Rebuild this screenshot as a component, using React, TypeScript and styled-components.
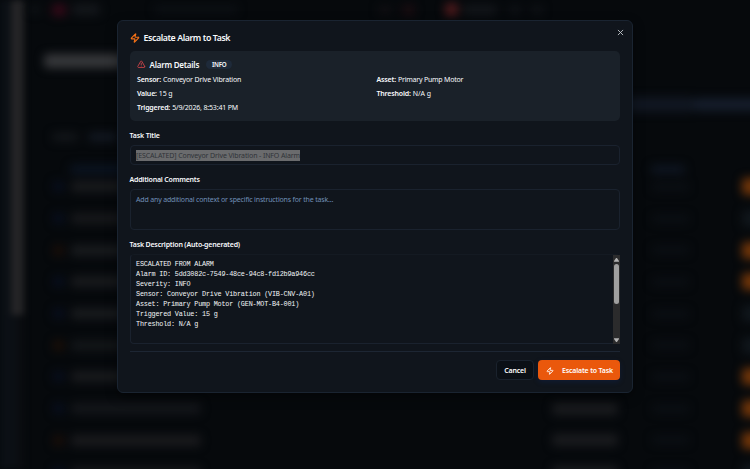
import React from "react";
import styled, { createGlobalStyle } from "styled-components";

const Global = createGlobalStyle`
  * { box-sizing: border-box; }
  html, body { margin: 0; height: 100%; background: #06090c; overflow: hidden; }
  body { font-family: "Noto Sans", "Open Sans", sans-serif; color: #f8fafc; }
`;

/* ---------- dimmed page behind the dialog ---------- */

const Screen = styled.div`
  display: grid;
  width: 750px;
  height: 469px;
  overflow: hidden;
  > * { grid-area: 1 / 1; }
`;

const Page = styled.div`
  display: flex;
  width: 750px;
  height: 469px;
  overflow: hidden;
  background: #06090c;
`;

const Rail = styled.div`
  flex: none;
  width: 24px;
  height: 469px;
  display: flex;
  justify-content: flex-end;
  background: linear-gradient(90deg, #0b1016, #0b0f14 60%, #0a0b0e);
  filter: blur(3px);
`;

const RailThumb = styled.div`
  width: 13px;
  height: 315px;
  background: #242426;
`;

const Content = styled.div`
  flex: 1;
  min-width: 0;
  display: flex;
  flex-direction: column;
  filter: blur(5px);
`;

const Line = styled.div<{ $h: number }>`
  flex: none;
  display: flex;
  align-items: center;
  height: ${(p) => p.$h}px;
`;

const Smudge = styled.div<{ $w: number; $h: number; $c: string; $gap?: number }>`
  flex: none;
  width: ${(p) => p.$w}px;
  height: ${(p) => p.$h}px;
  margin-left: ${(p) => p.$gap ?? 0}px;
  border-radius: 4px;
  background: ${(p) => p.$c};
`;

const rows = [
  { dot: "#080e1e", text: "#191a1d", hot: true },
  { dot: "#080e1e", text: "#17181b", hot: false },
  { dot: "#1a0e08", text: "#191b1e", hot: true },
  { dot: "#080e1e", text: "#191a1d", hot: true },
  { dot: "#080e1e", text: "#191b1e", hot: false },
  { dot: "#1c0f07", text: "#131619", hot: false },
  { dot: "#080e1e", text: "#191a1d", hot: true },
  { dot: "#080e1e", text: "#14161a", hot: true },
  { dot: "#1a0e08", text: "#1a1a1d", hot: true },
  { dot: "#080e1e", text: "#17181b", hot: false },
];

function Backdrop() {
  return (
    <Page>
      <Rail><RailThumb /></Rail>
      <Content>
        <Line $h={19}>
          <Smudge $w={10} $h={7} $c="#111519" $gap={6} />
          <Smudge $w={14} $h={12} $c="#350918" $gap={12} />
          <Smudge $w={28} $h={11} $c="#14171b" $gap={6} />
          <Smudge $w={84} $h={7} $c="#0d1115" $gap={54} />
          <Smudge $w={14} $h={8} $c="#110f13" $gap={140} />
          <Smudge $w={13} $h={12} $c="#190c10" $gap={10} />
          <Smudge $w={13} $h={13} $c="#501a1c" $gap={30} />
          <Smudge $w={34} $h={10} $c="#13161a" $gap={5} />
          <Smudge $w={12} $h={8} $c="#101318" $gap={12} />
          <Smudge $w={12} $h={8} $c="#101318" $gap={10} />
        </Line>
        <Line $h={84}><Smudge $w={100} $h={14} $c="#37383b" $gap={20} /></Line>
        <Line $h={3}><Smudge $w={170} $h={15} $c="#111722" $gap={500} /><Smudge $w={80} $h={13} $c="#151d2b" /></Line>
        <Line $h={61}><Smudge $w={26} $h={8} $c="#14171b" $gap={28} /><Smudge $w={30} $h={8} $c="#141a24" $gap={10} /></Line>
        <Line $h={4}>
          <Smudge $w={60} $h={9} $c="#0b1422" $gap={46} />
          <Smudge $w={34} $h={9} $c="#0e1521" $gap={521} />
        </Line>
        {rows.map((r, i) => (
          <Line key={i} $h={31.7}>
            <Smudge $w={11} $h={11} $c={r.dot} $gap={29} />
            <Smudge $w={130} $h={11} $c={r.text} $gap={7} />
            <Smudge $w={66} $h={12} $c="#1a1b1e" $gap={351} />
            <Smudge $w={37} $h={8} $c="#0b0f14" $gap={34} />
            <Smudge $w={20} $h={17} $c={r.hot ? "#703509" : "#10161b"} $gap={53} />
          </Line>
        ))}
      </Content>
    </Page>
  );
}

/* ---------- dialog ---------- */

const Dialog = styled.section`
  width: 516px;
  height: 373px;
  margin: 20px 0 0 117px;
  padding: 0 12px;
  z-index: 1;
  display: flex;
  flex-direction: column;
  background: #10151c;
  border: 1px solid #1a2431;
  border-radius: 6px;
  box-shadow: 0 4px 12px rgba(0, 0, 0, 0.4);
`;

const Header = styled.header`
  flex: none;
  height: 30px;
  display: flex;
  align-items: flex-start;
  justify-content: space-between;
`;

const Heading = styled.h1`
  margin: 11px 0 0;
  height: 12px;
  display: flex;
  align-items: center;
  gap: 3.5px;
  font-size: 8.8px;
  line-height: 12px;
  font-weight: 600;
  letter-spacing: -0.42px;
  white-space: nowrap;
`;

const Close = styled.button`
  margin: 8px -5px 0 0;
  padding: 0;
  width: 8px;
  height: 8px;
  display: flex;
  border: 0;
  background: none;
  color: #c3c7cc;
`;

const Details = styled.section`
  flex: none;
  height: 70px;
  padding: 7px 8px 0 7px;
  background: #1a2129;
  border-radius: 5px;
`;

const DetailsTitle = styled.h2`
  margin: 0;
  height: 13px;
  display: flex;
  align-items: center;
  font-size: 8px;
  line-height: 12px;
  font-weight: 600;
  letter-spacing: -0.22px;
  white-space: nowrap;
  svg { margin-right: 4px; }
`;

const Badge = styled.span`
  margin-left: 7px;
  width: 26px;
  height: 9px;
  display: flex;
  justify-content: center;
  border-radius: 5px;
  background: #1e2a3a;
  font-size: 6.2px;
  line-height: 9px;
  font-weight: 600;
`;

const Facts = styled.dl`
  margin: 1.5px 0 0;
  display: grid;
  grid-template-columns: 1fr 1fr;
  column-gap: 4px;
  grid-auto-rows: 14px;
`;

const Fact = styled.div<{ $spacing: number }>`
  display: flex;
  align-items: center;
  gap: 2px;
  font-size: 7px;
  line-height: 14px;
  letter-spacing: ${(p) => p.$spacing}px;
  white-space: nowrap;
  dt { font-weight: 600; letter-spacing: -0.17px; }
  dd { margin: 0; }
`;

const Label = styled.label<{ $top: number; $spacing: number }>`
  flex: none;
  height: 10px;
  margin-top: ${(p) => p.$top}px;
  margin-left: -0.5px;
  font-size: 7px;
  line-height: 10px;
  font-weight: 600;
  letter-spacing: ${(p) => p.$spacing}px;
  white-space: nowrap;
`;

const Field = styled.div<{ $h: number; $top: number }>`
  flex: none;
  height: ${(p) => p.$h}px;
  margin-top: ${(p) => p.$top}px;
  padding: 4px 5px 0;
  border: 1px solid #1a222e;
  border-radius: 4px;
  font-size: 7px;
  line-height: 10px;
  white-space: nowrap;
`;

const Selected = styled.span`
  display: block;
  width: 164px;
  height: 11px;
  line-height: 11px;
  background: #6a6b6d;
  color: #303338;
  letter-spacing: -0.115px;
`;

const Placeholder = styled.span`
  display: block;
  line-height: 11px;
  color: #7190b8;
  letter-spacing: -0.17px;
`;

const Description = styled(Field)`
  display: flex;
  justify-content: space-between;
  padding: 0 0 0 5px;
  border-top-color: #141a22;
`;

const Generated = styled.pre`
  margin: 4px 0 0;
  font: 6.8px/10px "Liberation Mono", monospace;
  letter-spacing: -0.195px;
  color: #f3f5f8;
`;

const Scrollbar = styled.div`
  width: 7px;
  height: 89px;
  margin-right: -1px;
  display: flex;
  flex-direction: column;
  align-items: center;
  justify-content: space-between;
  padding: 2.5px 0 2px;
  background: #2b2b2c;
  color: #b2b2b2;
`;

const Thumb = styled.div`
  width: 5px;
  height: 40px;
  margin: 2px 0 auto;
  border-radius: 3px;
  background: #9f9f9f;
`;

const Footer = styled.footer`
  flex: none;
  height: 40px;
  margin-top: 7px;
  padding-top: 8px;
  display: flex;
  justify-content: flex-end;
  gap: 4px;
  border-top: 1px solid #1d2633;
`;

const Button = styled.button<{ $primary?: boolean }>`
  width: ${(p) => (p.$primary ? 82 : 38)}px;
  height: 20px;
  padding: ${(p) => (p.$primary ? "1px 0 0 1px" : "1px 0 0")};
  display: flex;
  align-items: center;
  justify-content: center;
  gap: 8px;
  border: ${(p) => (p.$primary ? "0" : "1px solid #1a222d")};
  border-radius: 4px;
  background: ${(p) => (p.$primary ? "#ea580c" : "#0b1016")};
  box-shadow: ${(p) => (p.$primary ? "0 2px 5px rgba(15, 35, 80, 0.45)" : "none")};
  color: #fff;
  font: 600 7px/12px "Noto Sans", sans-serif;
  letter-spacing: -0.18px;
  white-space: nowrap;
`;

const Zap = ({ size, color }: { size: number; color: string }) => (
  <svg width={size} height={size} viewBox="0 0 24 24" fill="none" stroke={color} strokeWidth="2.6" strokeLinecap="round" strokeLinejoin="round">
    <path d="M4 14a1 1 0 0 1-.78-1.63l9.9-10.2a.5.5 0 0 1 .86.46l-1.92 6.02A1 1 0 0 0 13 10h7a1 1 0 0 1 .78 1.63l-9.9 10.2a.5.5 0 0 1-.86-.46l1.92-6.02A1 1 0 0 0 11 14z" />
  </svg>
);

const Warning = () => (
  <svg width="8.5" height="8.5" viewBox="0 0 24 24" fill="none" stroke="#e5484d" strokeWidth="2.2" strokeLinecap="round" strokeLinejoin="round">
    <path d="m21.73 18-8-14a2 2 0 0 0-3.48 0l-8 14A2 2 0 0 0 4 21h16a2 2 0 0 0 1.73-3M12 9v4M12 17h.01" />
  </svg>
);

const Arrow = ({ down }: { down?: boolean }) => (
  <svg width="5" height="4" viewBox="0 0 5 4" fill="currentColor">
    <path d={down ? "M0 0.2h5v.8L2.9 4h-.8L0 1z" : "M0 3.8h5V3L2.9 0h-.8L0 3z"} />
  </svg>
);

const description = `ESCALATED FROM ALARM
Alarm ID: 5dd3082c-7549-48ce-94c8-fd12b9a946cc
Severity: INFO
Sensor: Conveyor Drive Vibration (VIB-CNV-A01)
Asset: Primary Pump Motor (GEN-MOT-B4-001)
Triggered Value: 15 g
Threshold: N/A g`;

const facts = [
  { name: "Sensor:", value: "Conveyor Drive Vibration", spacing: -0.15 },
  { name: "Asset:", value: "Primary Pump Motor", spacing: -0.22 },
  { name: "Value:", value: "15 g", spacing: -0.15 },
  { name: "Threshold:", value: "N/A g", spacing: -0.05 },
  { name: "Triggered:", value: "5/9/2026, 8:53:41 PM", spacing: -0.16 },
];

export default function App() {
  return (
    <>
      <Global />
      <Screen>
        <Backdrop />
        <Dialog role="dialog">
          <Header>
            <Heading><Zap size={10} color="#f97316" />Escalate Alarm to Task</Heading>
            <Close aria-label="Close">
              <svg width="7" height="7" viewBox="0 0 7 7" stroke="currentColor" strokeWidth="0.9" strokeLinecap="round">
                <path d="M1.2 1.2l4.6 4.6M5.8 1.2L1.2 5.8" />
              </svg>
            </Close>
          </Header>
          <Details>
            <DetailsTitle><Warning />Alarm Details<Badge>INFO</Badge></DetailsTitle>
            <Facts>
              {facts.map((f) => (
                <Fact key={f.name} $spacing={f.spacing}><dt>{f.name}</dt><dd>{f.value}</dd></Fact>
              ))}
            </Facts>
          </Details>
          <Label $top={10} $spacing={-0.15}>Task Title</Label>
          <Field $h={20} $top={4}><Selected>[ESCALATED] Conveyor Drive Vibration - INFO Alarm</Selected></Field>
          <Label $top={10} $spacing={-0.2}>Additional Comments</Label>
          <Field $h={41} $top={4}><Placeholder>Add any additional context or specific instructions for the task...</Placeholder></Field>
          <Label $top={10} $spacing={-0.18}>Task Description (Auto-generated)</Label>
          <Description $h={90} $top={4}>
            <Generated>{description}</Generated>
            <Scrollbar><Arrow /><Thumb /><Arrow down /></Scrollbar>
          </Description>
          <Footer>
            <Button>Cancel</Button>
            <Button $primary><Zap size={8} color="#fff" />Escalate to Task</Button>
          </Footer>
        </Dialog>
      </Screen>
    </>
  );
}
